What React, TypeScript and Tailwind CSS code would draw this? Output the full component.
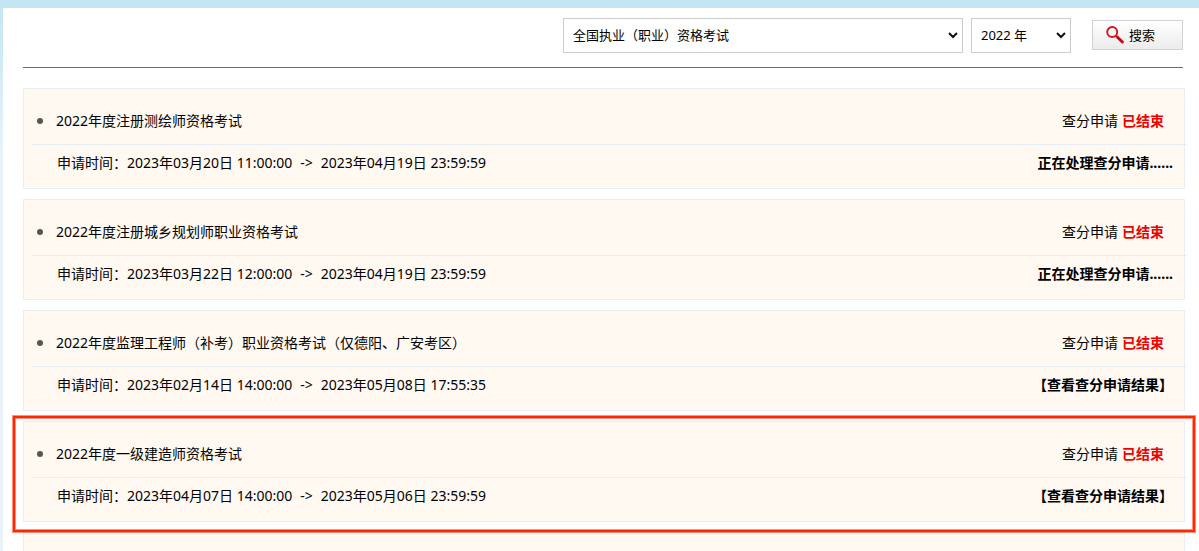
import { useState } from 'react'

interface Exam {
  id: number
  title: string
  start: string
  end: string
  result: string
  published: boolean
  highlighted?: boolean
}

const exams: Exam[] = [
  {
    id: 1,
    title: '2022年度注册测绘师资格考试',
    start: '2023年03月20日 11:00:00',
    end: '2023年04月19日 23:59:59',
    result: '正在处理查分申请......',
    published: false,
  },
  {
    id: 2,
    title: '2022年度注册城乡规划师职业资格考试',
    start: '2023年03月22日 12:00:00',
    end: '2023年04月19日 23:59:59',
    result: '正在处理查分申请......',
    published: false,
  },
  {
    id: 3,
    title: '2022年度监理工程师（补考）职业资格考试（仅德阳、广安考区）',
    start: '2023年02月14日 14:00:00',
    end: '2023年05月08日 17:55:35',
    result: '【查看查分申请结果】',
    published: true,
  },
  {
    id: 4,
    title: '2022年度一级建造师资格考试',
    start: '2023年04月07日 14:00:00',
    end: '2023年05月06日 23:59:59',
    result: '【查看查分申请结果】',
    published: true,
    highlighted: true,
  },
]

function SearchIcon() {
  return (
    <svg width="20" height="20" viewBox="0 0 20 20" fill="none" aria-hidden="true">
      <circle cx="7.2" cy="7" r="5" stroke="#d9141c" strokeWidth="1.9" />
      <path d="M10.8 10.6 L13 12.8" stroke="#d9141c" strokeWidth="2" />
      <path d="M12.2 12 L17.4 17" stroke="#c9090f" strokeWidth="3" strokeLinecap="round" />
    </svg>
  )
}

function Chevron() {
  return (
    <svg
      className="pointer-events-none absolute top-3 right-[5px]"
      width="10"
      height="10"
      viewBox="0 0 10 10"
      fill="none"
      aria-hidden="true"
    >
      <path d="M1 3 L5 7 L9 3" stroke="#111" strokeWidth="2" />
    </svg>
  )
}

function ExamCard({ exam }: { exam: Exam }) {
  return (
    <li className="relative border border-[#e8eef6] bg-[#fff9f2] pt-2 pb-2">
      <div className="-mr-[3px] ml-2 flex h-12 items-center justify-between border-b border-[#e6eef5] pr-[23px] pl-[5px]">
        <h2 className="flex items-center">
          <span className="mr-[13px] size-[6px] rounded-full bg-[#555]" />
          {exam.title}
        </h2>
        <p className="flex gap-1">
          查分申请 <strong className="text-[#f00000]">已结束</strong>
        </p>
      </div>
      <div className="flex h-[35px] items-center justify-between pr-[11px] pl-[33px]">
        <p className="flex gap-2">
          <span>申请时间：{exam.start}</span>
          <span>-&gt;</span>
          <span>{exam.end}</span>
        </p>
        {exam.published ? (
          <a href="#" className="font-bold">
            {exam.result}
          </a>
        ) : (
          <strong>{exam.result}</strong>
        )}
      </div>
      {exam.highlighted && (
        <div className="pointer-events-none absolute -top-[6px] -right-[11px] -bottom-[11px] -left-[11px] border-2 border-[#ff2600] shadow-[0_0_0_1px_#ff260080,inset_0_0_0_1px_#ff260080]" />
      )}
    </li>
  )
}

export default function App() {
  const [category, setCategory] = useState('qualification')
  const [year, setYear] = useState('2022')

  return (
    <div className="h-screen overflow-hidden bg-linear-to-b from-[#c3e5f4] to-[#eaf3fa] to-30% pt-2 pl-[3px] font-['Noto_Sans','Noto_Sans_CJK_SC',sans-serif] text-sm text-black">
      <main className="min-h-full bg-white pr-[14px] pl-5">
        {/* Search bar */}
        <form
          className="mr-[2px] flex h-[60px] items-start justify-end border-b border-[#0a8cc4] pt-[10px] text-[13px]"
          onSubmit={(e) => e.preventDefault()}
        >
          <div className="relative mr-2 w-[400px]">
            <select
              aria-label="考试类别"
              value={category}
              onChange={(e) => setCategory(e.target.value)}
              className="h-[35px] w-full appearance-none border border-[#ccc] bg-white pl-[9px]"
            >
              <option value="qualification">全国执业（职业）资格考试</option>
            </select>
            <Chevron />
          </div>
          <div className="relative mr-[21px] w-[100px]">
            <select
              aria-label="年份"
              value={year}
              onChange={(e) => setYear(e.target.value)}
              className="h-[35px] w-full appearance-none border border-[#ccc] bg-white pl-[9px]"
            >
              <option value="2022">2022 年</option>
            </select>
            <Chevron />
          </div>
          <button
            type="submit"
            className="mt-[2px] flex h-[30px] w-[91px] items-center gap-1 border border-[#d2d2d2] bg-linear-to-b from-white to-[#ececec] pl-3"
          >
            <SearchIcon />
            搜索
          </button>
        </form>

        {/* Exam list */}
        <ul className="mt-5 flex flex-col gap-[10px]">
          {exams.map((exam) => (
            <ExamCard key={exam.id} exam={exam} />
          ))}
          <li className="h-[101px] border border-[#e8eef6] bg-[#fff9f2]" />
        </ul>
      </main>
    </div>
  )
}
